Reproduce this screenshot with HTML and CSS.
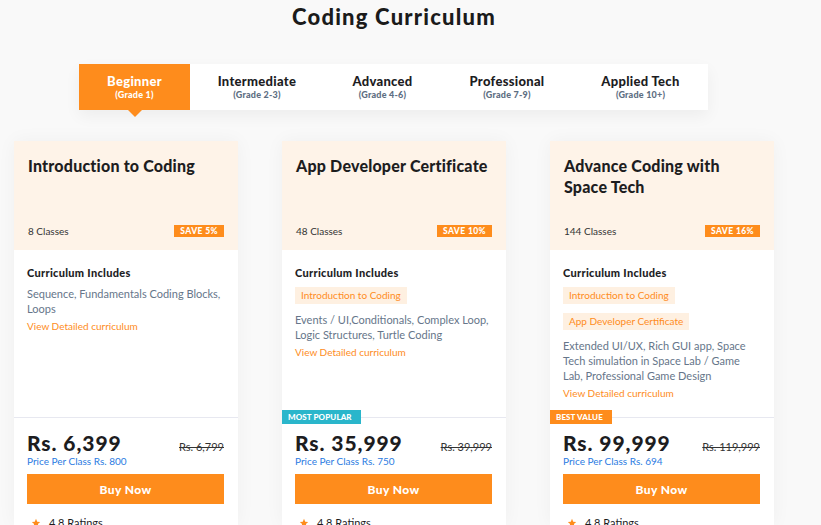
FILE: index.html
```html
<!DOCTYPE html>
<html lang="en">
<head>
<meta charset="utf-8">
<title>Coding Curriculum</title>
<link rel="stylesheet" href="styles.css">
</head>
<body>
<main class="page">
  <h1 class="title">Coding Curriculum</h1>

  <nav class="tabs">
    <div class="tab active w1"><span class="tab-name">Beginner</span><span class="tab-grade">(Grade 1)</span></div>
    <div class="tab w2"><span class="tab-name">Intermediate</span><span class="tab-grade">(Grade 2-3)</span></div>
    <div class="tab w3"><span class="tab-name">Advanced</span><span class="tab-grade">(Grade 4-6)</span></div>
    <div class="tab w4"><span class="tab-name">Professional</span><span class="tab-grade">(Grade 7-9)</span></div>
    <div class="tab w5"><span class="tab-name">Applied Tech</span><span class="tab-grade">(Grade 10+)</span></div>
  </nav>

  <section class="cards">
    <article class="card">
      <header class="card-head">
        <h2 class="card-title">Introduction to Coding</h2>
        <div class="head-meta">
          <span class="classes">8 Classes</span>
          <span class="save">SAVE 5%</span>
        </div>
      </header>
      <div class="card-body">
        <h3 class="inc-title">Curriculum Includes</h3>
        <p class="desc">Sequence, Fundamentals Coding Blocks, Loops</p>
        <a class="view">View Detailed curriculum</a>
      </div>
      <div class="price-box">
        <div class="price-row">
          <span class="price">Rs. 6,399</span>
          <span class="old">Rs. 6,799</span>
        </div>
        <div class="per-class">Price Per Class Rs. 800</div>
        <button class="buy">Buy Now</button>
        <div class="rating"><svg class="star" viewBox="0 0 24 24"><path d="M12 2l2.9 6.9 7.1.6-5.4 4.7 1.7 7-6.3-3.9-6.3 3.9 1.7-7L2 9.5l7.1-.6z"/></svg><span>4.8 Ratings</span></div>
      </div>
    </article>

    <article class="card">
      <header class="card-head">
        <h2 class="card-title">App Developer Certificate</h2>
        <div class="head-meta">
          <span class="classes">48 Classes</span>
          <span class="save">SAVE 10%</span>
        </div>
      </header>
      <div class="card-body">
        <h3 class="inc-title">Curriculum Includes</h3>
        <span class="tag">Introduction to Coding</span>
        <p class="desc">Events / UI,Conditionals, Complex Loop, Logic Structures, Turtle Coding</p>
        <a class="view">View Detailed curriculum</a>
      </div>
      <div class="price-box">
        <span class="ribbon teal">MOST POPULAR</span>
        <div class="price-row">
          <span class="price">Rs. 35,999</span>
          <span class="old">Rs. 39,999</span>
        </div>
        <div class="per-class">Price Per Class Rs. 750</div>
        <button class="buy">Buy Now</button>
        <div class="rating"><svg class="star" viewBox="0 0 24 24"><path d="M12 2l2.9 6.9 7.1.6-5.4 4.7 1.7 7-6.3-3.9-6.3 3.9 1.7-7L2 9.5l7.1-.6z"/></svg><span>4.8 Ratings</span></div>
      </div>
    </article>

    <article class="card">
      <header class="card-head">
        <h2 class="card-title">Advance Coding with Space Tech</h2>
        <div class="head-meta">
          <span class="classes">144 Classes</span>
          <span class="save">SAVE 16%</span>
        </div>
      </header>
      <div class="card-body">
        <h3 class="inc-title">Curriculum Includes</h3>
        <span class="tag">Introduction to Coding</span>
        <span class="tag">App Developer Certificate</span>
        <p class="desc">Extended UI/UX, Rich GUI app, Space Tech simulation in Space Lab / Game Lab, Professional Game Design</p>
        <a class="view">View Detailed curriculum</a>
      </div>
      <div class="price-box">
        <span class="ribbon orange">BEST VALUE</span>
        <div class="price-row">
          <span class="price">Rs. 99,999</span>
          <span class="old">Rs. 119,999</span>
        </div>
        <div class="per-class">Price Per Class Rs. 694</div>
        <button class="buy">Buy Now</button>
        <div class="rating"><svg class="star" viewBox="0 0 24 24"><path d="M12 2l2.9 6.9 7.1.6-5.4 4.7 1.7 7-6.3-3.9-6.3 3.9 1.7-7L2 9.5l7.1-.6z"/></svg><span>4.8 Ratings</span></div>
      </div>
    </article>
  </section>
</main>
</body>
</html>
```

FILE: styles.css
```css
* { box-sizing: border-box; }

html, body {
  margin: 0;
  padding: 0;
  background: #f9f9f9;
  font-family: "Lato", "Noto Sans", sans-serif;
  color: #1d1d1f;
  overflow: hidden;
}

.page {
  width: 760px;
  margin-left: 14px;
}

.title {
  margin: 0;
  text-align: center;
  font-size: 22px;
  font-weight: 900;
  line-height: 34px;
  letter-spacing: 1.2px;
  color: #1b1b1b;
}

.tabs {
  display: flex;
  width: 629px;
  margin: 30px 0 0 65px;
  background: #fff;
  box-shadow: 0 6px 16px rgba(0, 0, 0, 0.05);
}

.tab {
  position: relative;
  height: 46px;
  display: flex;
  flex-direction: column;
  align-items: center;
  justify-content: center;
  white-space: nowrap;
}

.w1 { width: 111px; }
.w2 { width: 134px; }
.w3 { width: 117px; }
.w4 { width: 132px; }
.w5 { width: 135px; }

.tab-name {
  font-size: 13px;
  font-weight: 900;
  line-height: 15px;
  letter-spacing: 0.3px;
  color: #1d1d1f;
}

.tab-grade {
  font-size: 9px;
  font-weight: 900;
  line-height: 11px;
  color: #5d6e82;
  letter-spacing: 0.2px;
}

.tab.active {
  background: #fe8c1c;
}

.tab.active .tab-name,
.tab.active .tab-grade {
  color: #fff;
}

.tab.active::after {
  content: "";
  position: absolute;
  left: 50%;
  bottom: -7px;
  margin-left: -7px;
  border-left: 7px solid transparent;
  border-right: 7px solid transparent;
  border-top: 7px solid #fe8c1c;
}

.cards {
  display: flex;
  gap: 44px;
  margin-top: 31px;
}

.card {
  width: 224px;
  height: 384px;
  overflow: hidden;
  background: #fff;
  display: flex;
  flex-direction: column;
  box-shadow: 0 0 18px rgba(0, 0, 0, 0.045);
}

.card-head {
  flex: 0 0 109px;
  background: #fef3e8;
  padding: 14px 14px 13px 14px;
  display: flex;
  flex-direction: column;
  justify-content: space-between;
}

.card-title {
  margin: 0;
  font-size: 16px;
  font-weight: 900;
  line-height: 21px;
  letter-spacing: 0.2px;
  color: #1d1d1f;
}

.head-meta {
  display: flex;
  justify-content: space-between;
  align-items: center;
}

.classes {
  font-size: 10px;
  color: #333;
  line-height: 12px;
}

.save {
  background: #fe8c1c;
  color: #fff;
  font-size: 8.5px;
  font-weight: 900;
  line-height: 12px;
  padding: 0 6px;
  letter-spacing: 0.4px;
}

.card-body {
  flex: 0 0 167px;
  padding: 16px 14px 0 13px;
  display: flex;
  flex-direction: column;
  align-items: flex-start;
}

.inc-title {
  margin: 0 0 6px 0;
  font-size: 11px;
  font-weight: 900;
  line-height: 14px;
  letter-spacing: 0.3px;
  color: #1d1d1f;
}

.tag {
  display: inline-block;
  background: #fef0e1;
  color: #fe8c1c;
  font-size: 10px;
  line-height: 17px;
  padding: 0 6px;
  margin: 1px 0 8px 0;
}

.desc {
  margin: 0;
  font-size: 11px;
  line-height: 15px;
  color: #66768a;
}

.view {
  margin-top: 3px;
  font-size: 10px;
  line-height: 14px;
  color: #fe8c1c;
}

.price-box {
  flex: 0 0 auto;
  position: relative;
  border-top: 1px solid #e7e8f0;
  padding: 14px 14px 0 13px;
}

.ribbon {
  position: absolute;
  left: 0;
  top: -8px;
  height: 14px;
  padding: 0 6px;
  font-size: 8px;
  font-weight: 900;
  line-height: 14px;
  color: #fff;
  letter-spacing: 0.1px;
}

.ribbon.teal { background: #2ab6cb; width: 79px; }
.ribbon.orange { background: #fe8c1c; width: 62px; }

.price-row {
  display: flex;
  justify-content: space-between;
  align-items: baseline;
}

.price {
  font-size: 21px;
  font-weight: 900;
  line-height: 22px;
  letter-spacing: 0.9px;
  color: #1d1d1f;
}

.old {
  font-size: 11px;
  color: #333;
  text-decoration: line-through;
  text-decoration-thickness: 1px;
}

.per-class {
  font-size: 10px;
  line-height: 13px;
  margin-top: 1px;
  color: #2a7be2;
}

.buy {
  display: block;
  width: 100%;
  height: 30px;
  margin-top: 6px;
  border: 0;
  background: #fe8c1c;
  color: #fff;
  font-family: inherit;
  font-size: 12px;
  font-weight: 900;
  letter-spacing: 0.4px;
}

.rating {
  display: flex;
  align-items: center;
  gap: 8px;
  margin-top: 13px;
  padding-left: 4px;
  font-size: 11px;
  line-height: 12px;
  color: #1d1d1f;
}

.star {
  width: 10px;
  height: 10px;
  fill: #fe8c1c;
}
```
